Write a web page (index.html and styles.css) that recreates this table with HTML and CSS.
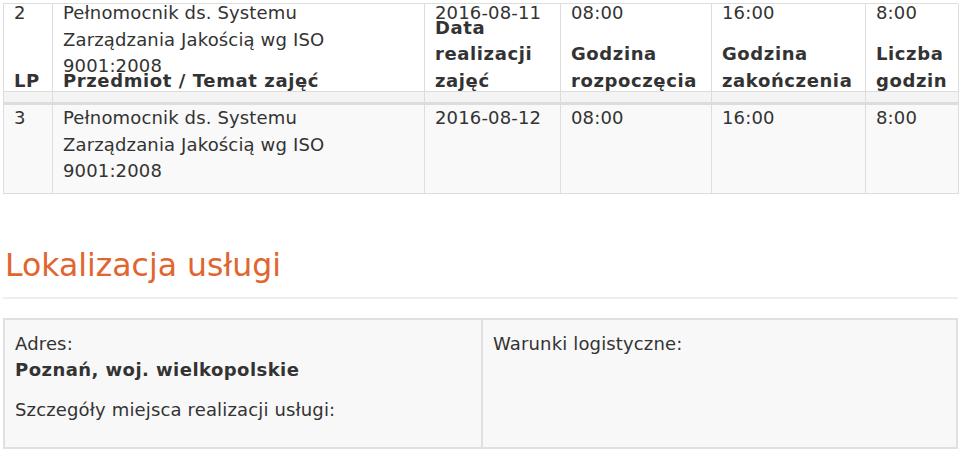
FILE: index.html
```html
<!DOCTYPE html>
<html lang="pl">
<head>
<meta charset="utf-8">
<title>Harmonogram</title>
<link rel="stylesheet" href="styles.css">
</head>
<body>
<div class="page">
  <div class="tbl">
    <div class="cell top"><span class="val">2</span><span class="head">LP</span></div>
    <div class="cell top subject"><span class="val">Pełnomocnik ds. Systemu Zarządzania Jakością wg ISO 9001:2008</span><span class="head">Przedmiot / Temat zajęć</span></div>
    <div class="cell top"><span class="val">2016-08-11</span><span class="head">Data realizacji zajęć</span></div>
    <div class="cell top"><span class="val">08:00</span><span class="head">Godzina rozpoczęcia</span></div>
    <div class="cell top"><span class="val">16:00</span><span class="head">Godzina zakończenia</span></div>
    <div class="cell top"><span class="val">8:00</span><span class="head">Liczba godzin</span></div>

    <div class="cell band"></div>
    <div class="cell band"></div>
    <div class="cell band"></div>
    <div class="cell band"></div>
    <div class="cell band"></div>
    <div class="cell band"></div>

    <div class="cell row">3</div>
    <div class="cell row subject">Pełnomocnik ds. Systemu Zarządzania Jakością wg ISO 9001:2008</div>
    <div class="cell row">2016-08-12</div>
    <div class="cell row">08:00</div>
    <div class="cell row">16:00</div>
    <div class="cell row">8:00</div>
  </div>

  <h2 class="section-title">Lokalizacja usługi</h2>
  <hr class="rule">

  <div class="loc">
    <div class="loc-cell">
      <p>Adres:<br><strong>Poznań, woj. wielkopolskie</strong></p>
      <p>Szczegóły miejsca realizacji usługi:</p>
    </div>
    <div class="loc-cell">
      <p>Warunki logistyczne:</p>
    </div>
  </div>
</div>
</body>
</html>
```

FILE: styles.css
```css
html, body {
  margin: 0;
  padding: 0;
  background: #ffffff;
}

body {
  font-family: "DejaVu Sans", sans-serif;
  font-size: 18px;
  line-height: 26.5px;
  letter-spacing: 0.15px;
  color: #333333;
  overflow: hidden;
}

.page {
  padding: 3px 2px 0 3px;
}

.tbl {
  display: grid;
  grid-template-columns: 49px 372px 136px 151px 154px 93px;
  border-top: 1px solid #dddddd;
  border-left: 1px solid #dddddd;
}

.cell {
  border-right: 1px solid #dddddd;
  border-bottom: 1px solid #dddddd;
  padding: 0 10px;
}

.subject {
  padding-right: 20px;
}

.top {
  display: grid;
  height: 87px;
  background: #ffffff;
}

.top .val,
.top .head {
  grid-area: 1 / 1;
}

.top .val {
  align-self: start;
  margin-top: -4px;
}

.top .head {
  align-self: end;
  margin-bottom: -3px;
  font-weight: bold;
  letter-spacing: 0.6px;
}

.band {
  height: 10px;
  background: #f4f4f4;
  border-bottom: 3px solid #dddddd;
}

.row {
  background: #f9f9f9;
  padding-bottom: 8px;
}

.section-title {
  margin: 52px 0 0 2px;
  font-size: 31.5px;
  line-height: 38px;
  font-weight: normal;
  letter-spacing: 0;
  color: #e0652f;
}

.rule {
  margin: 13px 0 0 0;
  border: 0;
  border-top: 2px solid #eeeeee;
  height: 0;
}

.loc {
  margin-top: 19px;
  display: grid;
  grid-template-columns: 476px 1fr;
  border: 2px solid #e0e0e0;
  background: #f8f8f8;
}

.loc-cell {
  padding: 11px 10px 24px;
}

.loc-cell + .loc-cell {
  border-left: 2px solid #e0e0e0;
}

.loc-cell p {
  margin: 0;
}

.loc-cell strong {
  letter-spacing: 0.45px;
}

.loc-cell p + p {
  margin-top: 13px;
}
```
